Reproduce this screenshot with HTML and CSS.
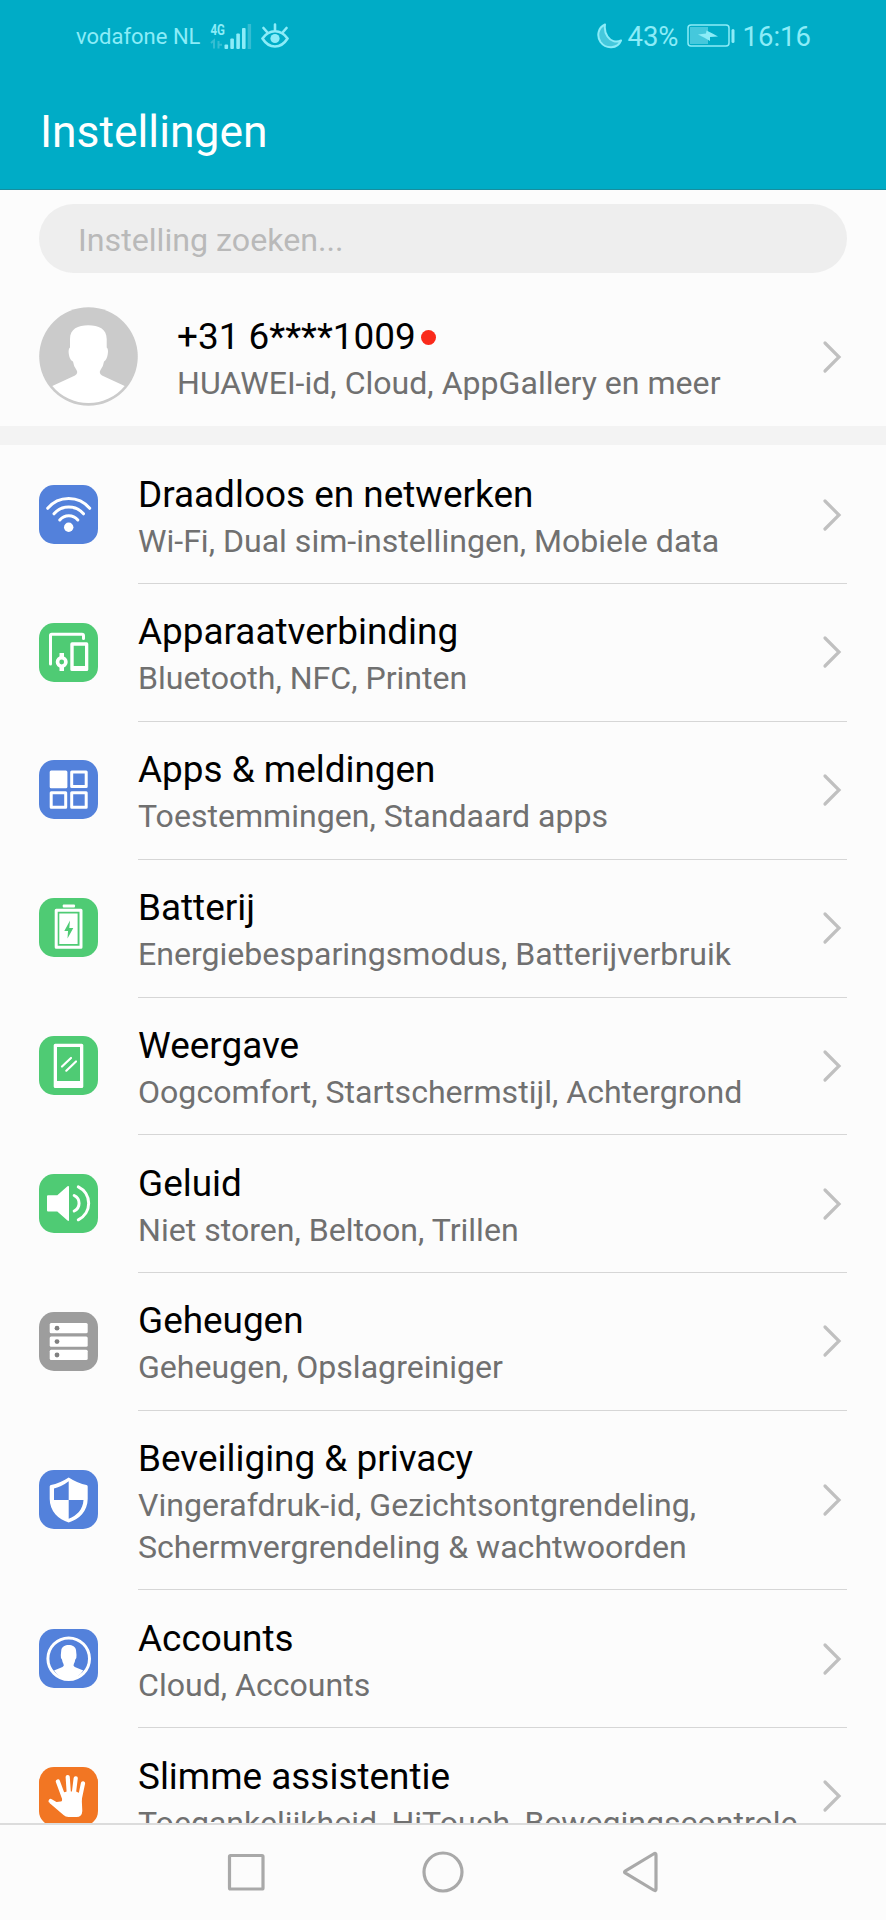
FILE: index.html
```html
<!DOCTYPE html>
<html lang="nl">
<head>
    <meta charset="utf-8" />
    <title>Instellingen</title>
    <link rel="stylesheet" href="styles.css">
</head>
<body>
    <header class="header">
        <div class="status-bar">
            <span class="carrier">vodafone NL</span>
            <svg class="signal" width="42" height="28" viewBox="0 0 42 28">
                <text class="network" x="0.5" y="13" textLength="14.5" lengthAdjust="spacingAndGlyphs">4G</text>
                <path class="dim" d="M1 21l3-2.500v8M8.500 19v7.500M9 22.700h3"/>
                <rect x="14.500" y="22.500" width="3.600" height="4.500" rx="1"/>
                <rect x="20.300" y="16.500" width="3.600" height="10.500" rx="1"/>
                <rect x="26.300" y="11.500" width="3.600" height="15.500" rx="1"/>
                <rect x="32" y="6" width="3.600" height="21" rx="1"/>
                <rect class="faint" x="37.700" y="2" width="3.400" height="25"/>
            </svg>
            <svg class="eye" width="28" height="26" viewBox="0 0 28 26">
                <path d="M1.500 15.500Q6.500 8.300 14 8.300T26.500 15.500Q21.500 23.500 14 23.500T1.500 15.500ZM14 8V1.500M6 9L2.500 5M22 9L25.500 5"/>
                <circle cx="14" cy="15.500" r="4.600"/>
            </svg>
            <div class="status-right">
                <svg class="moon" width="26" height="26" viewBox="0 0 26 26">
                    <path d="M8 1.500C1 4.500-.5 13 3.500 19C9 26.500 20.500 26 24 17.500C19 20 13.500 18 10.500 13.500C7.500 9 7.500 5 8 1.500Z"/>
                </svg>
                <span class="percent">43%</span>
                <svg class="battery" width="48" height="24" viewBox="0 0 48 24">
                    <rect class="outline" x="1" y="1" width="41" height="21" rx="3"/>
                    <rect class="level" x="3" y="3" width="18" height="17"/>
                    <path d="M11 10.500L19 9.500 19.500 6.500 25.500 9.500 31 12.500 23 13 23 17 17 13.500Z"/>
                    <rect x="44.500" y="5" width="3" height="14" rx="1.500"/>
                </svg>
                <span class="time">16:16</span>
            </div>
        </div>
        <h1>Instellingen</h1>
    </header>

    <main class="content">
        <input class="search" type="text" placeholder="Instelling zoeken...">

        <a class="profile">
            <svg class="avatar" width="99" height="99" viewBox="0 0 99 99">
                <circle cx="49.500" cy="49.500" r="49.300" fill="#cbcbcb"/>
                <path fill="#fff" d="M13.300 79L36 68.500Q39.500 66.500 37.500 63Q34.500 59 34 54.500C31.500 54 29.500 49 29.600 44Q29.700 41 31 40.500V32C31 22 39 18.300 49.300 18.300S67.700 22 67.700 32V40.500Q69 41 69 44C69 49 67 54 65 54.500Q64.500 59 61.500 63Q59.500 66.500 63 68.500L85.700 79A47 47 0 0 1 13.300 79Z"/>
            </svg>
            <div class="text">
                <h2>+31 6****1009<span class="dot"></span></h2>
                <p>HUAWEI-id, Cloud, AppGallery en meer</p>
            </div>
            <svg class="chevron" width="26" height="34" viewBox="0 0 26 34"><path d="M4 3L18 17 4 31"/></svg>
        </a>

        <ul class="settings">
            <li>
                <svg class="icon blue" viewBox="0 0 59 59">
                    <path class="line" d="M8.700 23.300A27.400 27.400 0 0 1 50.700 23.300M15 28.800A19.500 19.500 0 0 1 44.500 28.800M20.800 35A11.800 11.800 0 0 1 38.800 35"/>
                    <circle cx="29.700" cy="42.300" r="4.700"/>
                </svg>
                <div class="row">
                    <div class="text">
                        <h2>Draadloos en netwerken</h2>
                        <p>Wi-Fi, Dual sim-instellingen, Mobiele data</p>
                    </div>
                    <svg class="chevron" width="26" height="34" viewBox="0 0 26 34"><path d="M4 3L18 17 4 31"/></svg>
                </div>
            </li>
            <li>
                <svg class="icon green" viewBox="0 0 59 59">
                    <path class="line" d="M11.500 41V12.500Q11.500 11.300 12.700 11.300H43Q44.500 11.300 44.500 12.700V15.500"/>
                    <path fill-rule="evenodd" d="M33 19.300H47.700Q49.300 19.300 49.300 21V46.500Q49.300 48 47.700 48H33Q31.300 48 31.300 46.500V21Q31.300 19.300 33 19.300ZM34.700 22.700V43H46V22.700Z"/>
                    <path d="M20.500 30H25V34H20.500ZM20.500 44H25V48H20.500Z"/>
                    <circle class="line watch" cx="22.700" cy="39" r="4.200"/>
                </svg>
                <div class="row">
                    <div class="text">
                        <h2>Apparaatverbinding</h2>
                        <p>Bluetooth, NFC, Printen</p>
                    </div>
                    <svg class="chevron" width="26" height="34" viewBox="0 0 26 34"><path d="M4 3L18 17 4 31"/></svg>
                </div>
            </li>
            <li>
                <svg class="icon blue" viewBox="0 0 59 59">
                    <rect x="10.700" y="10.500" width="17.700" height="17.700" rx="1.500"/>
                    <rect class="line" x="32.700" y="12" width="14.500" height="14.500"/>
                    <rect class="line" x="12.200" y="32.700" width="14.500" height="14.500"/>
                    <rect class="line" x="32.700" y="32.700" width="14.500" height="14.500"/>
                </svg>
                <div class="row">
                    <div class="text">
                        <h2>Apps &amp; meldingen</h2>
                        <p>Toestemmingen, Standaard apps</p>
                    </div>
                    <svg class="chevron" width="26" height="34" viewBox="0 0 26 34"><path d="M4 3L18 17 4 31"/></svg>
                </div>
            </li>
            <li>
                <svg class="icon green" viewBox="0 0 59 59">
                    <rect x="23.700" y="6.500" width="12.300" height="3" rx="1"/>
                    <rect class="line" x="17.200" y="12.200" width="24.800" height="37"/>
                    <rect x="20.300" y="15.500" width="18.300" height="30.500"/>
                    <path class="cut" d="M31 22.500L25.300 33H29L28.500 40.500 34.300 30H30.300Z"/>
                </svg>
                <div class="row">
                    <div class="text">
                        <h2>Batterij</h2>
                        <p>Energiebesparingsmodus, Batterijverbruik</p>
                    </div>
                    <svg class="chevron" width="26" height="34" viewBox="0 0 26 34"><path d="M4 3L18 17 4 31"/></svg>
                </div>
            </li>
            <li>
                <svg class="icon green" viewBox="0 0 59 59">
                    <path fill-rule="evenodd" d="M16.200 7.700H42.800Q44.300 7.700 44.300 9.200V50.500Q44.300 52 42.800 52H16.200Q14.700 52 14.700 50.500V9.200Q14.700 7.700 16.200 7.700ZM18 11V45H41V11Z"/>
                    <path class="line thin" d="M23 30.500L32 22M27.300 34.700L37 25.500"/>
                </svg>
                <div class="row">
                    <div class="text">
                        <h2>Weergave</h2>
                        <p>Oogcomfort, Startschermstijl, Achtergrond</p>
                    </div>
                    <svg class="chevron" width="26" height="34" viewBox="0 0 26 34"><path d="M4 3L18 17 4 31"/></svg>
                </div>
            </li>
            <li>
                <svg class="icon green" viewBox="0 0 59 59">
                    <path d="M9 21.300H18.300L28.500 12.300Q30 11.300 30 13V46Q30 47.500 28.500 46.500L18.300 37.500H9Q8 37.500 8 36.500V22.300Q8 21.300 9 21.300Z"/>
                    <path class="line" d="M35.200 21.500A8.600 8.600 0 0 1 35.200 37M39.300 12.800A18.300 18.300 0 0 1 39.300 45.800"/>
                </svg>
                <div class="row">
                    <div class="text">
                        <h2>Geluid</h2>
                        <p>Niet storen, Beltoon, Trillen</p>
                    </div>
                    <svg class="chevron" width="26" height="34" viewBox="0 0 26 34"><path d="M4 3L18 17 4 31"/></svg>
                </div>
            </li>
            <li>
                <svg class="icon gray" viewBox="0 0 59 59">
                    <rect x="10.700" y="11" width="38" height="10.300" rx="1.500"/>
                    <rect x="10.700" y="24.400" width="38" height="10.300" rx="1.500"/>
                    <rect x="10.700" y="37.800" width="38" height="10.300" rx="1.500"/>
                    <circle class="cut" cx="18" cy="16.200" r="2.400"/>
                    <circle class="cut" cx="18" cy="29.600" r="2.400"/>
                    <circle class="cut" cx="18" cy="43" r="2.400"/>
                </svg>
                <div class="row">
                    <div class="text">
                        <h2>Geheugen</h2>
                        <p>Geheugen, Opslagreiniger</p>
                    </div>
                    <svg class="chevron" width="26" height="34" viewBox="0 0 26 34"><path d="M4 3L18 17 4 31"/></svg>
                </div>
            </li>
            <li>
                <svg class="icon blue" viewBox="0 0 59 59">
                    <path d="M29.700 7.500Q39 13.500 47.500 15Q48.700 15.200 48.700 16.500V29C48.700 41 40 49.500 29.700 52.500C19.500 49.500 10.700 41 10.700 29V16.500Q10.700 15.200 12 15Q20.500 13.500 29.700 7.500Z"/>
                    <path class="cut" d="M29.700 11.300V30H15V18.500Q23 16.500 29.700 11.300ZM29.700 30H44.500C44 39.500 37.500 46 29.700 48.700Z"/>
                </svg>
                <div class="row">
                    <div class="text">
                        <h2>Beveiliging &amp; privacy</h2>
                        <p>Vingerafdruk-id, Gezichtsontgrendeling,<br>Schermvergrendeling &amp; wachtwoorden</p>
                    </div>
                    <svg class="chevron" width="26" height="34" viewBox="0 0 26 34"><path d="M4 3L18 17 4 31"/></svg>
                </div>
            </li>
            <li>
                <svg class="icon blue" viewBox="0 0 59 59">
                    <circle class="line" cx="29.700" cy="29.700" r="20.800"/>
                    <path d="M15 41.500L23.500 38Q25.500 37 24.500 35Q23.300 33 23 30.500Q21.500 29 21.800 26L22.300 21C23 17.500 26 16 29.700 16S36.400 17.500 37 21L37.500 26Q37.800 29 36.300 30.500Q36 33 34.800 35Q33.800 37 35.800 38L44.300 41.500Q38 50.500 29.700 50.500T15 41.500Z"/>
                </svg>
                <div class="row">
                    <div class="text">
                        <h2>Accounts</h2>
                        <p>Cloud, Accounts</p>
                    </div>
                    <svg class="chevron" width="26" height="34" viewBox="0 0 26 34"><path d="M4 3L18 17 4 31"/></svg>
                </div>
            </li>
            <li>
                <svg class="icon orange" viewBox="0 0 59 59">
                    <path class="line finger" d="M18.900 14.500L25 31M28.700 10L30 29M36.700 11.300L34.500 29M44 16.300L40.500 33M11.700 34L22 40"/>
                    <path d="M22.500 26L28 24.500H37L42.500 27L43.300 44Q43 50 37.500 50H29.500Q26.500 50 24.500 48L10.500 36 21.500 34.500Q23.500 35 23 31Z"/>
                </svg>
                <div class="row">
                    <div class="text">
                        <h2>Slimme assistentie</h2>
                        <p>Toegankelijkheid, HiTouch, Bewegingscontrole</p>
                    </div>
                    <svg class="chevron" width="26" height="34" viewBox="0 0 26 34"><path d="M4 3L18 17 4 31"/></svg>
                </div>
            </li>
        </ul>
    </main>

    <nav class="navbar">
        <svg viewBox="0 0 42 42"><rect x="4.500" y="4.500" width="33.500" height="33.500" rx="1"/></svg>
        <svg viewBox="0 0 42 42"><circle cx="21" cy="21" r="19"/></svg>
        <svg viewBox="0 0 42 42"><path d="M34.500 3Q37 1.500 37 4V38Q37 40.500 34.500 39L6.500 22.200Q4.500 21 6.500 19.800Z"/></svg>
    </nav>
</body>
</html>
```
FILE: styles.css
```css
* {
    box-sizing: border-box;
}

body {
    margin: 0;
    height: 1920px;
    display: flex;
    flex-direction: column;
    overflow: hidden;
    background: #fcfcfc;
    font-family: Roboto, sans-serif;
}

h1, h2, p, ul {
    margin: 0;
    padding: 0;
    font-weight: 400;
    white-space: nowrap;
}

/* Header */
.header {
    flex: none;
    height: 189.5px;
    background: #00acc6;
    border-bottom: 1px solid #178d9e;
    color: #fff;
}

.header h1 {
    padding: 34px 0 0 40px;
    font-size: 44.4px;
    line-height: 52px;
}

.status-bar {
    display: flex;
    align-items: center;
    height: 72px;
    padding: 0 75px 0 76px;
    color: #8cecf8;
    fill: #8cecf8;
}

.carrier {
    width: 134px;
    font-size: 22px;
}

.network {
    font-size: 15.5px;
    font-weight: 700;
}

.dim {
    fill: none;
    stroke: #35bdd2;
    stroke-width: 2;
}

.faint {
    fill: #35bdd2;
}

.eye {
    margin-left: 9px;
}

.eye path {
    fill: none;
    stroke: #8cecf8;
    stroke-width: 2.6;
    stroke-linecap: round;
}

.status-right {
    display: flex;
    align-items: center;
    margin-left: auto;
    font-size: 27.5px;
}

.moon path {
    fill: #45c8dc;
    stroke: #8cecf8;
    stroke-width: 2;
    stroke-linejoin: round;
}

.percent {
    margin-left: 4px;
}

.battery {
    margin: 0 8px;
}

.battery .outline {
    fill: none;
    stroke: #8cecf8;
    stroke-width: 1.5;
}

.battery .level {
    fill: #45c8dc;
}

/* Content */
.content {
    flex: 1;
    min-height: 0;
    overflow: hidden;
}

.search {
    display: block;
    width: 808px;
    height: 69px;
    margin: 14.5px 39px 0;
    padding: 2px 39px 0;
    border: none;
    border-radius: 35px;
    background: #eee;
    font: 32.2px Roboto, sans-serif;
}

.search::placeholder {
    color: #b9b9b9;
}

.profile {
    display: flex;
    align-items: center;
    height: 172.4px;
    padding: 14px 39px 0;
    border-bottom: 19.4px solid #f3f3f3;
}

.profile .text {
    margin-left: 39px;
}

.text {
    flex: 1;
    padding-top: 3px;
}

.text h2 {
    font-size: 36.9px;
    line-height: 50px;
    color: #000;
}

.text p {
    padding-top: 1px;
    font-size: 32.1px;
    line-height: 41.7px;
    color: #707070;
}

.dot {
    display: inline-block;
    width: 15px;
    height: 15px;
    margin-left: 5px;
    border-radius: 50%;
    background: #fa2a1b;
    vertical-align: 4px;
}

.chevron {
    flex: none;
    fill: none;
    stroke: #c0c0c0;
    stroke-width: 3.2;
    stroke-linecap: round;
}

/* Settings list */
.settings {
    list-style: none;
    padding-top: 1px;
}

.settings li {
    display: flex;
    align-items: center;
    padding: 0 39px;
}

.row {
    flex: 1;
    display: flex;
    align-items: center;
    margin-left: 40px;
    padding: 20.3px 0 20.8px;
    border-bottom: 1px solid #d6d6d6;
}

.icon {
    flex: none;
    width: 59px;
    height: 59px;
    margin-bottom: 2px;
    border-radius: 15px;
    fill: #fff;
}

.icon .line {
    fill: none;
    stroke: #fff;
    stroke-width: 3;
    stroke-linecap: round;
    stroke-linejoin: round;
}

.icon .thin {
    stroke-width: 2.2;
}

.icon .watch {
    stroke-width: 3.6;
}

.icon .finger {
    stroke-width: 4.2;
}

.blue {
    background: #5381db;
}

.green {
    background: #4fcb74;
}

.gray {
    background: #9d9d9d;
}

.orange {
    background: #f27623;
}

.blue .cut {
    fill: #5381db;
}

.green .cut {
    fill: #4fcb74;
}

.gray .cut {
    fill: #808080;
}

/* Navigation bar */
.navbar {
    flex: none;
    display: flex;
    justify-content: center;
    align-items: center;
    gap: 155px;
    height: 97px;
    padding-bottom: 2px;
    border-top: 2px solid #dcdcdc;
    background: #fcfcfc;
}

.navbar svg {
    width: 42px;
    height: 42px;
    fill: none;
    stroke: #a9a9a9;
    stroke-width: 3.2;
}
```
